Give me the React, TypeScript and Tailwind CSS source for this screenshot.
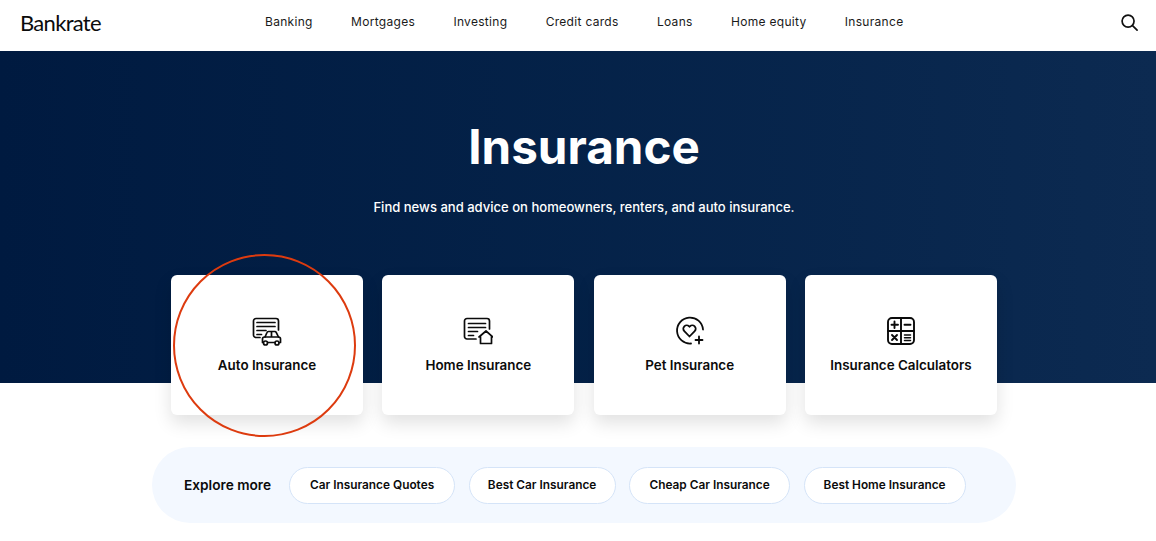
import React from "react";

function AutoIcon() {
  return (
    <svg width="30" height="30" viewBox="0 0 30 30" fill="none" stroke="#0b0b0b" strokeWidth="1.7" strokeLinecap="round" strokeLinejoin="round">
      <path d="M8 21.5H4A2.5 2.5 0 0 1 1.500 19V5A2.500 2.500 0 0 1 4 2.500h20A2.500 2.500 0 0 1 26.500 5v9" />
      <path d="M5 6.500h18M5 10.500h18M5 14.500h9M5 18.500h4.500" />
      <path d="M13 21l2-4.500a1.500 1.500 0 0 1 1.400-1h6.500a1.500 1.500 0 0 1 1.300.8L26.500 21" />
      <path d="M10.800 26.500h-.3V23a2 2 0 0 1 2-2h14a2 2 0 0 1 2 2v3.500h-.8M16 26.500h6.500M19.500 16v5" />
      <circle cx="13.500" cy="27" r="2" />
      <circle cx="25" cy="27" r="2" />
    </svg>
  );
}

function HomeIcon() {
  return (
    <svg width="30" height="30" viewBox="0 0 30 30" fill="none" stroke="#0b0b0b" strokeWidth="1.7" strokeLinecap="round" strokeLinejoin="round">
      <path d="M13 23H4A2.500 2.500 0 0 1 1.500 20.500V5A2.500 2.500 0 0 1 4 2.500h20A2.500 2.500 0 0 1 26.500 5v8" />
      <path d="M5.500 7.500h17M5.500 11.500h17M5.500 15.500h9M5.500 19.500h5" />
      <path d="M17.500 27.500v-7l-1.500.5 7-6 7 6-1.500-.5v7z" />
    </svg>
  );
}

function PetIcon() {
  return (
    <svg width="30" height="30" viewBox="0 0 30 30" fill="none" stroke="#0b0b0b" strokeWidth="1.8" strokeLinecap="round" strokeLinejoin="round">
      <path d="M16 27.500A13 13 0 1 1 28 13.500" />
      <path d="M14.500 20.500l-5.200-5.400a3.400 3.400 0 0 1 0-4.800 3.400 3.400 0 0 1 4.800 0l.4.500.4-.5a3.400 3.400 0 0 1 4.800 0 3.400 3.400 0 0 1 0 4.800z" />
      <path d="M24 20.500v7M20.500 24h7" />
    </svg>
  );
}

function CalcIcon() {
  return (
    <svg width="30" height="30" viewBox="0 0 30 30" fill="none" stroke="#0b0b0b" strokeWidth="1.9" strokeLinecap="round" strokeLinejoin="round">
      <rect x="2" y="2" width="26" height="26" rx="4" />
      <path d="M15 2v26M2 15h26" />
      <path d="M8.500 5.500v6.500M5.500 8.700h6.500M18.500 8.700h6M6 19l5 5M11 19l-5 5" />
      <path strokeWidth="1.500" d="M18.500 19h6M18.500 21.800h6M18.500 24.600h6" />
    </svg>
  );
}

const nav = ["Banking", "Mortgages", "Investing", "Credit cards", "Loans", "Home equity", "Insurance"];
const cards = [
  { label: "Auto Insurance", icon: <AutoIcon /> },
  { label: "Home Insurance", icon: <HomeIcon /> },
  { label: "Pet Insurance", icon: <PetIcon /> },
  { label: "Insurance Calculators", icon: <CalcIcon /> },
];
const chips = [
  { label: "Car Insurance Quotes", width: "w-[166px]" },
  { label: "Best Car Insurance", width: "w-[147px]" },
  { label: "Cheap Car Insurance", width: "w-[161px]" },
  { label: "Best Home Insurance", width: "w-[162px]" },
];

export default function App() {
  return (
    <div className="relative w-[1156px] h-[541px] overflow-hidden bg-white font-['Inter','Liberation_Sans',sans-serif] text-[#0b0b0b]">
      <header className="h-[51px] box-border pb-[7px] flex items-center pl-[20px] pr-[17px]">
        <span className="w-[245px] text-[22px] font-normal tracking-[-0.7px] font-['Lato',sans-serif]">Bankrate</span>
        <nav className="flex gap-[38.3px] text-[12px] font-normal tracking-[0.3px] text-[#1a1a1a]">
          {nav.map((n) => (
            <span key={n}>{n}</span>
          ))}
        </nav>
        <svg className="ml-auto" width="19" height="19" viewBox="0 0 20 20" fill="none" stroke="#111" strokeWidth="1.800" strokeLinecap="round">
          <circle cx="8.500" cy="8.500" r="6.300" />
          <path d="M13.200 13.200L18 18" />
        </svg>
      </header>

      <section className="h-[332px] bg-gradient-to-r from-[#001a40] to-[#0c2a51] pl-[12px] flex flex-col items-center text-white">
        <h1 className="mt-[66px] text-[47.6px] leading-[60px] font-bold">Insurance</h1>
        <p className="mt-[20px] text-[13.05px] leading-[20px] font-medium">Find news and advice on homeowners, renters, and auto insurance.</p>
      </section>

      <div className="pl-[12px] flex flex-col items-center">
        <div className="-mt-[108px] w-[826px] flex justify-between">
          {cards.map((c) => (
            <div key={c.label} className="w-[192px] h-[140px] rounded-[6px] bg-white shadow-[0_8px_18px_rgba(0,0,0,0.12)] flex flex-col items-center pt-[41px]">
              <div className="h-[30px] flex items-center justify-center">{c.icon}</div>
              <span className="mt-[9px] text-[13.4px] leading-[20px] font-semibold">{c.label}</span>
            </div>
          ))}
        </div>

        <div className="mt-[32px] w-[864px] h-[76px] rounded-[38px] bg-[#f3f8ff] flex items-center pl-[32px] gap-[13.5px]">
          <span className="mr-[4.5px] text-[13.7px] font-semibold">Explore more</span>
          {chips.map((c) => (
            <span key={c.label} className={`${c.width} h-[37px] pt-[2px] rounded-full bg-white border border-[#d5e4f8] flex items-center justify-center text-[11.85px] font-semibold`}>{c.label}</span>
          ))}
        </div>
      </div>

      <div className="absolute left-[173px] top-[254px] w-[183px] h-[183px] rounded-full border-2 border-[#dd3b0f]" />
    </div>
  );
}
